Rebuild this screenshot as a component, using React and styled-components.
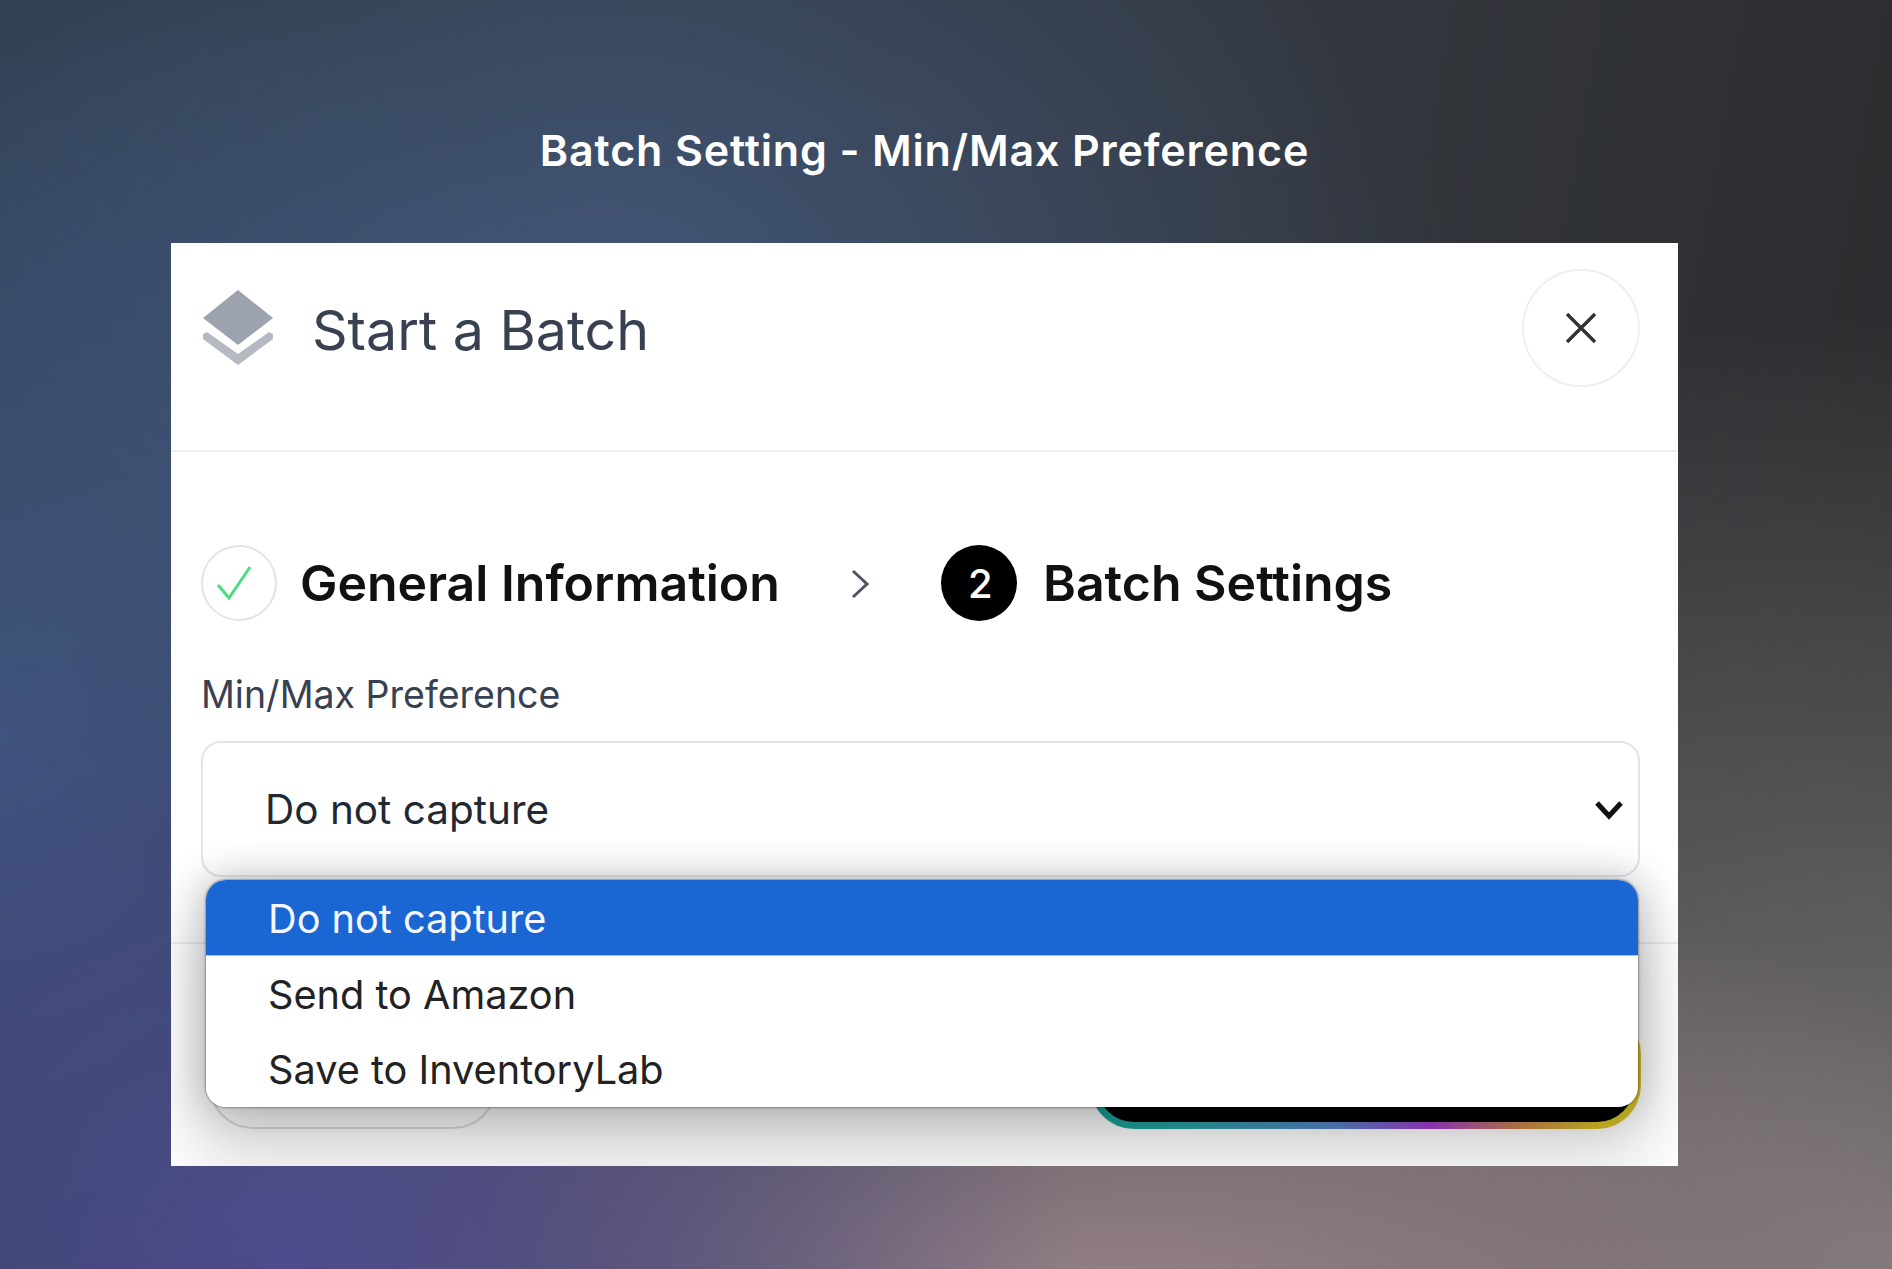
import React from 'react'
import styled, { createGlobalStyle } from 'styled-components'

const GlobalStyle = createGlobalStyle`
  html, body {
    margin: 0;
    padding: 0;
  }
  #root {
    width: 1892px;
    height: 1269px;
    overflow: hidden;
  }
`

const Slide = styled.div`
  box-sizing: border-box;
  width: 1892px;
  height: 1269px;
  padding: 116px 214px 0 171px;
  font-family: "Inter", sans-serif;
  background:
    radial-gradient(800px 650px at 15% 100%, rgba(76, 74, 142, 0.95), rgba(76, 74, 142, 0) 100%),
    radial-gradient(1050px 500px at 58% 105%, rgba(156, 134, 140, 1), rgba(156, 134, 140, 0) 100%),
    radial-gradient(1100px 950px at 100% 100%, rgba(122, 118, 118, 1), rgba(122, 118, 118, 0) 100%),
    radial-gradient(750px 800px at 0% 58%, rgba(66, 92, 140, 0.75), rgba(66, 92, 140, 0) 100%),
    radial-gradient(850px 620px at 32% 24%, rgba(66, 86, 118, 1), rgba(66, 86, 118, 0) 100%),
    linear-gradient(100deg, #2d3a48 0%, #33373e 60%, #2b2b2c 100%);
`

const SlideTitle = styled.h1`
  margin: 0 0 59px;
  height: 68px;
  line-height: 68px;
  text-align: center;
  font-size: 43px;
  font-weight: 600;
  letter-spacing: 0.85px;
  color: #ffffff;
`

const Card = styled.div`
  position: relative;
  display: flex;
  flex-direction: column;
  width: 1507px;
  height: 923px;
  overflow: hidden;
  background: #ffffff;
`

const Header = styled.header`
  box-sizing: border-box;
  display: flex;
  align-items: flex-start;
  height: 209px;
  padding: 26px 38px 0 32px;
  border-bottom: 2px solid #eceef1;
`

const HeaderIcon = styled.svg`
  width: 70px;
  height: 75px;
  margin-top: 21px;
  flex: none;
`

const HeaderTitle = styled.h2`
  flex: 1;
  margin: 27px 0 0 39px;
  font-size: 55.5px;
  line-height: 68px;
  font-weight: 400;
  color: #374151;
`

const CloseButton = styled.button`
  display: flex;
  align-items: center;
  justify-content: center;
  width: 118px;
  height: 118px;
  padding: 0;
  border: 2px solid #eeeff2;
  border-radius: 50%;
  background: #ffffff;
  color: #333333;
`

const Body = styled.div`
  position: relative;
  padding: 93px 38px 0 30px;
`

const Steps = styled.div`
  display: flex;
  align-items: center;
  height: 76px;
`

const StepCircle = styled.span`
  box-sizing: border-box;
  display: flex;
  align-items: center;
  justify-content: center;
  flex: none;
  width: 76px;
  height: 76px;
  padding-left: ${(p) => (p.$done ? '0' : '3px')};
  border-radius: 50%;
  border: ${(p) => (p.$done ? '2px solid #e2e4e8' : 'none')};
  background: ${(p) => (p.$done ? '#ffffff' : '#000000')};
  color: #ffffff;
  font-size: 40px;
  font-weight: 500;
`

const CheckMark = styled.svg`
  width: 36px;
  height: 36px;
  margin-right: 10px;
`

const StepLabel = styled.span`
  margin-left: ${(p) => p.$gap}px;
  font-size: 50px;
  line-height: 60px;
  font-weight: 600;
  color: #111111;
`

const StepArrow = styled.svg`
  width: 20px;
  height: 32px;
  margin: 2px 71px 0 70px;
  flex: none;
`

const FieldLabel = styled.label`
  display: block;
  margin-top: 52px;
  font-size: 37.5px;
  line-height: 44px;
  color: #374151;
`

const SelectBox = styled.div`
  box-sizing: border-box;
  display: flex;
  align-items: center;
  justify-content: space-between;
  height: 136px;
  margin-top: 24px;
  padding: 0 14px 0 62px;
  border: 2px solid #e2e4e8;
  border-radius: 20px;
  font-size: 40.5px;
  color: #222831;
`

const SelectChevron = styled.svg`
  width: 30px;
  height: 22px;
  margin-top: 2px;
  flex: none;
`

const Footer = styled.footer`
  display: flex;
  flex: 1;
  align-items: flex-end;
  justify-content: space-between;
  margin-top: 65px;
  padding: 0 37px 37px 38px;
  border-top: 2px solid #eceef1;
`

const CancelButton = styled.button`
  width: 288px;
  height: 119px;
  border: 2px solid #d9dbe0;
  border-radius: 44px;
  background: #ffffff;
`

const NextButton = styled.button`
  width: 551px;
  height: 119px;
  border: 7px solid transparent;
  border-radius: 44px;
  background:
    linear-gradient(#000000, #000000) padding-box,
    linear-gradient(90deg, #14a896 0%, #2ba4a8 18%, #5a86cc 45%, #a83fd4 62%, #d08a50 78%, #dcc62a 92%) border-box;
`

const DropdownShadow = styled.div`
  position: absolute;
  top: 637px;
  left: 35px;
  width: 1432px;
  height: 227px;
  border-radius: 20px;
  box-shadow:
    0 0 2px 1px rgba(0, 0, 0, 0.32),
    0 0 38px 4px rgba(0, 0, 0, 0.2),
    0 40px 70px 10px rgba(0, 0, 0, 0.18);
`

const Dropdown = styled.ul`
  position: absolute;
  top: 637px;
  left: 35px;
  width: 1432px;
  height: 227px;
  margin: 0;
  padding: 0;
  list-style: none;
  overflow: hidden;
  border-radius: 20px;
  background: #ffffff;
  font-size: 39.7px;
  color: #222222;
`

const Option = styled.li`
  box-sizing: border-box;
  display: flex;
  align-items: center;
  height: ${(p) => (p.$active ? '76px' : '75px')};
  padding: 3px 0 0 62px;
  background: ${(p) => (p.$active ? '#1a66d2' : 'transparent')};
  color: ${(p) => (p.$active ? '#f4f7ff' : 'inherit')};
  border-bottom: ${(p) => (p.$active ? '1px solid #a9c4ee' : 'none')};
`

const App = () => {
  return (
    <Slide>
      <GlobalStyle />
      <SlideTitle>Batch Setting - Min/Max Preference</SlideTitle>
      <Card>
        <Header>
          <HeaderIcon viewBox="0 0 70 75">
            <polygon points="35,0 70,28 35,55 0,28" fill="#9ca3af" />
            <polygon points="0,44 4,42 35,64 66,42 70,44 70,49 35,75 0,49" fill="#b4b9c2" />
          </HeaderIcon>
          <HeaderTitle>Start a Batch</HeaderTitle>
          <CloseButton>
            <svg width="34" height="34" viewBox="0 0 34 34">
              <path d="M3 3 L31 31 M31 3 L3 31" stroke="#333" strokeWidth="3.4" fill="none" />
            </svg>
          </CloseButton>
        </Header>
        <Body>
          <Steps>
            <StepCircle $done>
              <CheckMark viewBox="0 0 36 36">
                <path d="M2 20 L13 33 L34 2" stroke="#4ade80" strokeWidth="3" fill="none" />
              </CheckMark>
            </StepCircle>
            <StepLabel $gap={23}>General Information</StepLabel>
            <StepArrow viewBox="0 0 20 32">
              <path d="M3 3 L17 16 L3 29" stroke="#4b5563" strokeWidth="3" fill="none" />
            </StepArrow>
            <StepCircle>2</StepCircle>
            <StepLabel $gap={26}>Batch Settings</StepLabel>
          </Steps>
          <FieldLabel>Min/Max Preference</FieldLabel>
          <SelectBox>
            Do not capture
            <SelectChevron viewBox="0 0 30 22">
              <path d="M3 4 L15 17 L27 4" stroke="#111" strokeWidth="5" fill="none" />
            </SelectChevron>
          </SelectBox>
        </Body>
        <Footer>
          <CancelButton />
          <NextButton />
        </Footer>
        <DropdownShadow />
        <Dropdown>
          <Option $active>Do not capture</Option>
          <Option>Send to Amazon</Option>
          <Option>Save to InventoryLab</Option>
        </Dropdown>
      </Card>
    </Slide>
  )
}

export default App
